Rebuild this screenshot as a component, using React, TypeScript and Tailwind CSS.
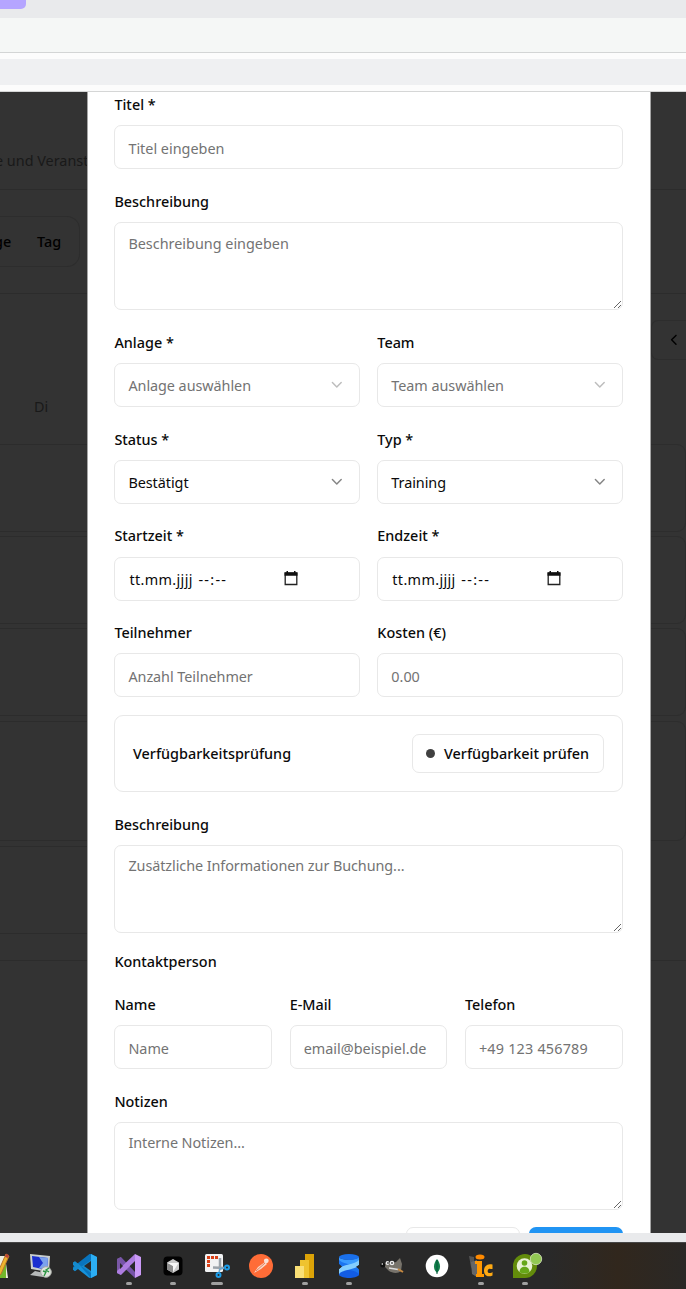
import type { ReactNode } from "react";
import { ChevronDown, ChevronLeft } from "lucide-react";

const box =
  "block w-full rounded-[7px] border border-[#e8e8e8] bg-white px-[13px] text-[14.4px] text-[#0a0a0a] placeholder:text-[#737373] placeholder:opacity-100 outline-none";

function Field({ label, children, className = "" }: { label: string; children: ReactNode; className?: string }) {
  return (
    <div className={`flex min-w-0 flex-1 flex-col ${className}`}>
      <label className="mb-[8.8px] h-[26.4px] pt-[3px] text-[14.4px] leading-[24.4px] font-medium whitespace-nowrap text-[#0a0a0a]">
        {label}
      </label>
      {children}
    </div>
  );
}

function TextInput({ placeholder, className = "" }: { placeholder: string; className?: string }) {
  return <input className={`${box} h-[44px] pt-[2px] ${className}`} placeholder={placeholder} />;
}

function Area({ placeholder, className = "" }: { placeholder: string; className?: string }) {
  return <textarea className={`${box} h-[88px] resize-y pt-[9px] leading-[22px] ${className}`} placeholder={placeholder} />;
}

function SelectBox({ value, muted = false }: { value: string; muted?: boolean }) {
  return (
    <button type="button" className={`${box} h-[44px]`}>
      <span className="flex items-center justify-between">
        <span className={`pt-[2px] tracking-[-0.05px] ${muted ? "text-[#737373]" : "text-[#0a0a0a]"}`}>{value}</span>
        <ChevronDown size={17.6} strokeWidth={2} className={muted ? "text-[#bdbdbd]" : "text-[#858585]"} />
      </span>
    </button>
  );
}

function DateTimeBox() {
  return (
    <div className={`${box} h-[44px]`}>
      <div className="flex h-full items-center pt-[3px] pl-[1px]">
        <span className="flex w-[155px] whitespace-pre">
          <span className="w-[69px] tracking-[0.35px]">tt.mm.jjjj</span>
          <span className="tracking-[1.3px]">--:--</span>
        </span>
        <svg width="14" height="15" viewBox="0 0 14 15" className="-mt-[4px]">
          <path d="M1.200 2h11.600v11.500H1.200z" fill="none" stroke="#222" strokeWidth="1.300" />
          <path d="M.5 1.500h13v3.200H.5zM2.500 0h1.500v2H2.500zM10 0h1.500v2H10z" fill="#111" />
        </svg>
      </div>
    </div>
  );
}

function BackdropLeft() {
  return (
    <div className="flex w-[87px] shrink-0 flex-col overflow-hidden bg-[#333333] text-[14.4px] whitespace-nowrap">
      <div className="h-[98px] border-b border-[#2c2c2c] pt-[59px] leading-[20px] text-[#191919]">
        <span className="-ml-[5px]">e und Veranst</span>
      </div>
      <div className="h-[104px] border-b border-[#2c2c2c] pt-[26px]">
        <div className="flex h-[51px] w-[80px] items-center rounded-r-[13px] border border-l-0 border-[#2d2d2d] font-medium text-black">
          <span className="-ml-[6px] w-[43px]">ge</span>
          <span>Tag</span>
        </div>
      </div>
      <div className="h-[150px] pt-[103px] pl-[34px] leading-[20px] text-[#191919]">Di</div>
      <div className="h-[88px] border-y border-[#2c2c2c]" />
      <div className="mt-[4px] h-[88px] border-y border-[#2c2c2c]" />
      <div className="mt-[4px] h-[88px] border-y border-[#2c2c2c]" />
      <div className="mt-[5px] h-[120px] border-y border-[#2c2c2c]" />
      <div className="mt-[5px] h-[88px] border-y border-[#2c2c2c]" />
      <div className="h-[27px] border-b border-[#2c2c2c]" />
    </div>
  );
}

function BackdropRight() {
  return (
    <div className="flex flex-1 flex-col overflow-hidden bg-[#333333]">
      <div className="h-[98px] border-b border-[#2c2c2c]" />
      <div className="h-[104px] border-b border-[#2c2c2c]" />
      <div className="mt-[26px] flex h-[40px] items-center rounded-l-[7px] border border-r-0 border-[#2d2d2d] pl-[13px]">
        <ChevronLeft size={17.6} className="text-black" />
      </div>
      <div className="mt-[84px] h-[88px] rounded-r-[9px] border border-l-0 border-[#2d2d2d]" />
      <div className="mt-[4px] h-[88px] rounded-r-[9px] border border-l-0 border-[#2d2d2d]" />
      <div className="mt-[4px] h-[88px] rounded-r-[9px] border border-l-0 border-[#2d2d2d]" />
      <div className="mt-[5px] h-[120px] rounded-r-[9px] border border-l-0 border-[#2d2d2d]" />
      <div className="h-[120px] border-b border-[#2c2c2c]" />
    </div>
  );
}

function TaskItem({ children, mark = "none" }: { children: ReactNode; mark?: "none" | "dot" | "wide" }) {
  return (
    <div className="flex w-[44px] shrink-0 flex-col items-center pt-[9px]">
      <svg width="28" height="28" viewBox="0 0 28 28" className="overflow-visible">
        {children}
      </svg>
      {mark !== "none" && (
        <div className={`mt-[2px] h-[3px] rounded-full bg-[#a0a0a0] ${mark === "wide" ? "w-[12px]" : "w-[6px]"}`} />
      )}
    </div>
  );
}

function Taskbar() {
  return (
    <div className="flex h-[47px] overflow-hidden border-t border-[#464646] bg-[linear-gradient(90deg,#292929_0%,#292929_80%,#31271d_90%,#2a2826_100%)]">
      <div className="-ml-[25px] flex">
        <TaskItem>
          <path d="M4 4h18l3 22H2z" fill="#efefdf" />
          <path d="M12 9l10 16H4z" fill="#73b72b" />
          <path d="M23 6v20H12V18z" fill="#73b72b" />
          <path d="M14 8l7-4 1 6-6 9z" fill="#efefdf" />
          <path d="M23 2l3 2-8 18-3 3v-5z" fill="#eeb52e" stroke="#bd762b" />
          <path d="M23 2l3 1-1 3-3-1z" fill="#b94435" />
        </TaskItem>
        <TaskItem>
          <path d="M3 2l20 2-1 16-18-3z" fill="#c9cfcf" />
          <path d="M5 4l16 2-1 12-14-3z" fill="#1a2fd0" />
          <path d="M12 5l9 1-1 12-8-2 4-5z" fill="#7ca2ed" />
          <path d="M8 19l9 2-1 4-13-2z" fill="#b7baba" />
          <circle cx="19" cy="20" r="5.3" fill="#dfe4dc" stroke="#a7aaa5" />
          <path d="M16 19l3 1-2 4M22 16l-3 2 3 2" fill="none" stroke="#2b9542" strokeWidth="1.4" />
        </TaskItem>
        <TaskItem>
          <path d="M20 2l6 3v18l-6 3L8 15.500l-4 3.200-2-1.300V15L18.500 2z" fill="#0874bd" />
          <path d="M2 11l2-1.500 4 3L20 26l-2-.2L2 13z" fill="#1593dc" />
          <path d="M4 9.300l4 3.400L20 21V8L8 16.200l-4 3.100-2-1.500v-1.600L4.500 14 2 12v-1.600z" fill="#158acb" />
          <path d="M20 2l6 3v18l-6 3z" fill="#2caef3" />
          <path d="M20 9v10l-7-5z" fill="#292929" />
        </TaskItem>
        <TaskItem mark="dot">
          <path d="M2 7l4-2 14 15v6L2 9z" fill="#7653a8" />
          <path d="M2 7l4-2v18l-4-2z" fill="#7957a5" />
          <path d="M20 2v7L6 23l-4-2v-2z" fill="#ad7de0" />
          <path d="M20 2l6 3v18l-6 3z" fill="#cb9af7" />
          <path d="M20 10v8l-5-4zM5 11l3 3-3 3z" fill="#292929" />
        </TaskItem>
        <TaskItem mark="dot">
          <rect x="4.500" y="4.500" width="19" height="19" rx="4" fill="#020202" />
          <path d="M14 7l6 3.500v7L14 21l-6-3.500v-7z" fill="#c9c9c9" />
          <path d="M8 10.500l6 3.500v7l-6-3.500z" fill="#8d8d8d" />
          <path d="M8.500 11h11L14 20v-6z" fill="#f6f6f6" />
        </TaskItem>
        <TaskItem mark="wide">
          <rect x="2" y="2" width="18" height="18" rx="1.500" fill="#f1f2f3" />
          <path d="M4 4h3v3H4zM8 4h3v3H8zM12 4h3v3h-3zM4 8h3v3H4zM4 12h3v3H4z" fill="#d84018" />
          <path d="M17 6v12M10 15.500l11 .5" fill="none" stroke="#9ba3aa" strokeWidth="2.500" />
          <circle cx="15.500" cy="23" r="2" fill="#292929" stroke="#1c9de9" strokeWidth="2" />
          <circle cx="24" cy="15.500" r="2" fill="#292929" stroke="#1c9de9" strokeWidth="2" />
          <path d="M16 20l1-3 4-1" fill="none" stroke="#6da5cc" strokeWidth="1.500" />
        </TaskItem>
        <TaskItem>
          <circle cx="14" cy="14" r="12" fill="#ff6c37" />
          <path d="M7 21l4-6 7-5 2 2-6 5z" fill="#f8d8c9" />
          <path d="M9 19l9-8" stroke="#df683f" strokeWidth=".8" />
          <circle cx="19.300" cy="8.800" r="2.400" fill="#f9e2d8" />
        </TaskItem>
        <TaskItem mark="dot">
          <path d="M14 2h9v24h-9z" fill="#dca307" />
          <path d="M9 8h9v18H9z" fill="#efc32f" />
          <path d="M4 14h9v12H4z" fill="#f9df76" />
        </TaskItem>
        <TaskItem mark="dot">
          <path d="M4 5c3 4 17 3 20 0v4.500c-1 3-5 4-10 3.500C9 13 5 11 4 9z" fill="#3a9bff" />
          <path d="M4 19c3-4 17-4 20-1v5c-3 4-17 4-20 0z" fill="#125ce4" />
          <path d="M4 8c4 5 20 4 20 10v4c-4-5-20-4-20-10z" fill="#1b74ef" />
          <path d="M24 8v5c-3 5-16 4-20 9v-5c3-5 16-4 20-9z" fill="#83ceff" />
          <ellipse cx="14" cy="5" rx="10" ry="3" fill="#1a70eb" />
          <path d="M4 12l3 2.500L4 17zM24 13l-3 1.700 3 2.300z" fill="#292929" />
        </TaskItem>
        <TaskItem>
          <path d="M5 11c5 1 8 0 12-1l4-4 2 6-1 7c-3 3-9 2-12 0l-4-4z" fill="#77736b" />
          <circle cx="3.800" cy="13" r="2.500" fill="#111" />
          <circle cx="3.300" cy="12" r=".8" fill="#fff" />
          <circle cx="8.500" cy="11" r="1.900" fill="#eee" />
          <circle cx="13" cy="11" r="2.300" fill="#eee" />
          <path d="M9 10v2M13 10v2" stroke="#111" />
          <path d="M10 16l9 1.500" stroke="#ddd" strokeWidth="1.500" />
          <path d="M19 17l5 3" stroke="#c58942" strokeWidth="2" />
        </TaskItem>
        <TaskItem>
          <circle cx="14" cy="14" r="11.300" fill="#fff" />
          <path d="M14 7c4 5 4 10 0 14-4-4-4-9 0-14z" fill="#11804b" />
          <path d="M14 8v14" stroke="#07583d" />
        </TaskItem>
        <TaskItem mark="dot">
          <path d="M2 4l5 1v15l-3-5z" fill="#555" />
          <path d="M4 10l6-2v17l-5-3z" fill="#666" />
          <ellipse cx="13" cy="5" rx="4.500" ry="2.500" fill="#ff8a00" />
          <path d="M8 9h7v13h2v3H9v-3h1V12H8z" fill="#ff9700" />
          <path d="M25.500 12.500v4.500h-2c-3-1.500-4.500 5 0 4 .7 0 1.300-.5 2-1v3.500c-6 2.500-8.500-1-8.500-5s3-7.500 8.500-6z" fill="#ffaa13" />
        </TaskItem>
        <TaskItem mark="dot">
          <path d="M2 26V14A12 12 0 1 1 14 26z" fill="#638c0b" />
          <circle cx="13.500" cy="14" r="7.800" fill="#e9f1d5" />
          <circle cx="13.500" cy="11" r="2.800" fill="#67a719" />
          <path d="M8.500 20c0-7 10-7 10 0-3 2-7 2-10 0z" fill="#67a719" />
          <circle cx="25" cy="7" r="5.700" fill="#92c853" stroke="#d9e6c2" strokeWidth=".8" />
        </TaskItem>
      </div>
    </div>
  );
}

export default function App() {
  return (
    <div className="flex h-[1289px] w-[686px] flex-col overflow-hidden bg-white font-['Noto_Sans','Open_Sans',sans-serif]">
      <div className="h-[18px] bg-[#e9eaec]">
        <div className="h-[9px] w-[26px] rounded-br-[5px] bg-[#b5a5ff]" />
      </div>
      <div className="h-[35px] border-b border-[#d3d5d5] bg-[#f5f7f6]" />
      <div className="h-[39px] border-b border-[#d5d6d6] bg-[#fcfcfc] pt-[6px]">
        <div className="h-[26px] bg-[#eff0f2]" />
      </div>

      <div className="flex h-[1141px] overflow-hidden">
        <BackdropLeft />
        <main className="flex w-[563.500px] shrink-0 flex-col gap-[17.6px] overflow-hidden border-x border-[#a5a5a5] bg-white pr-[26.900px] pl-[26.400px]">
          <Field label="Titel *" className="-mt-[1.800px] flex-none">
            <TextInput placeholder="Titel eingeben" />
          </Field>
          <Field label="Beschreibung" className="flex-none">
            <Area placeholder="Beschreibung eingeben" className="pt-[10px]" />
          </Field>
          <div className="flex gap-[17.6px]">
            <Field label="Anlage *">
              <SelectBox value="Anlage auswählen" muted />
            </Field>
            <Field label="Team">
              <SelectBox value="Team auswählen" muted />
            </Field>
          </div>
          <div className="flex gap-[17.6px]">
            <Field label="Status *">
              <SelectBox value="Bestätigt" />
            </Field>
            <Field label="Typ *">
              <SelectBox value="Training" />
            </Field>
          </div>
          <div className="flex gap-[17.6px]">
            <Field label="Startzeit *">
              <DateTimeBox />
            </Field>
            <Field label="Endzeit *">
              <DateTimeBox />
            </Field>
          </div>
          <div className="flex gap-[17.6px]">
            <Field label="Teilnehmer">
              <TextInput placeholder="Anzahl Teilnehmer" className="tracking-[-0.05px]" />
            </Field>
            <Field label="Kosten (€)">
              <TextInput placeholder="0.00" />
            </Field>
          </div>
          <section className="flex h-[77.4px] shrink-0 items-center justify-between rounded-[9px] border border-[#e8e8e8] px-[17.600px] text-[14.4px] font-medium text-[#0a0a0a]">
            <span>Verfügbarkeitsprüfung</span>
            <button
              type="button"
              className="flex h-[39px] w-[192px] items-center rounded-[7px] border border-[#e8e8e8] pl-[13px] whitespace-nowrap"
            >
              <span className="mr-[9px] size-[9px] rounded-full bg-[#404040]" />
              <span>Verfügbarkeit prüfen</span>
            </button>
          </section>
          <Field label="Beschreibung" className="flex-none">
            <Area placeholder="Zusätzliche Informationen zur Buchung..." className="tracking-[-0.07px]" />
          </Field>
          <h3 className="h-[21.600px] shrink-0 text-[14.4px] leading-[21.600px] font-medium text-[#0a0a0a]">
            Kontaktperson
          </h3>
          <div className="flex gap-[17.6px]">
            <Field label="Name">
              <TextInput placeholder="Name" className="pt-[0px]" />
            </Field>
            <Field label="E-Mail">
              <TextInput placeholder="email@beispiel.de" className="pt-[0px]" />
            </Field>
            <Field label="Telefon">
              <TextInput placeholder="+49 123 456789" className="pt-[0px] tracking-[0.2px]" />
            </Field>
          </div>
          <Field label="Notizen" className="flex-none">
            <Area placeholder="Interne Notizen..." className="tracking-[-0.07px]" />
          </Field>
          <div className="flex shrink-0 justify-end gap-[9px]">
            <div className="h-[44px] w-[114px] rounded-[7px] border border-[#e8e8e8]" />
            <div className="h-[44px] w-[94px] rounded-[7px] bg-[#2094f3]" />
          </div>
        </main>
        <BackdropRight />
      </div>

      <div className="h-[9px] bg-[#e9eaec]" />
      <Taskbar />
    </div>
  );
}
